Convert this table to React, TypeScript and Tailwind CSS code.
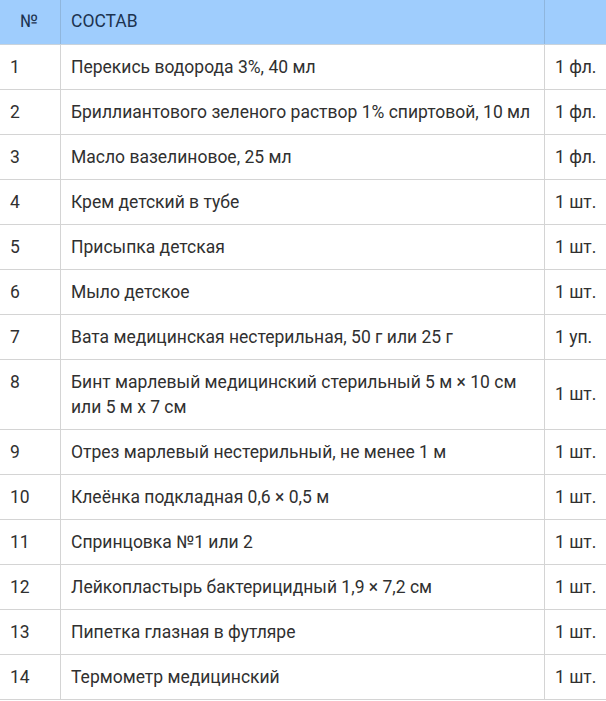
import React from "react";

const rows: [string, string, string][] = [
  ["1", "Перекись водорода 3%, 40 мл", "1 фл."],
  ["2", "Бриллиантового зеленого раствор 1% спиртовой, 10 мл", "1 фл."],
  ["3", "Масло вазелиновое, 25 мл", "1 фл."],
  ["4", "Крем детский в тубе", "1 шт."],
  ["5", "Присыпка детская", "1 шт."],
  ["6", "Мыло детское", "1 шт."],
  ["7", "Вата медицинская нестерильная, 50 г или 25 г", "1 уп."],
  ["8", "Бинт марлевый медицинский стерильный 5 м × 10 см или 5 м х 7 см", "1 шт."],
  ["9", "Отрез марлевый нестерильный, не менее 1 м", "1 шт."],
  ["10", "Клеёнка подкладная 0,6 × 0,5 м", "1 шт."],
  ["11", "Спринцовка №1 или 2", "1 шт."],
  ["12", "Лейкопластырь бактерицидный 1,9 × 7,2 см", "1 шт."],
  ["13", "Пипетка глазная в футляре", "1 шт."],
  ["14", "Термометр медицинский", "1 шт."],
];

export default function App() {
  return (
    <div
      className="w-[606px] h-[701px] bg-white overflow-hidden text-[17.5px] leading-[25px] text-[#303030]"
      style={{ fontFamily: "Roboto, 'Noto Sans', sans-serif" }}
    >
      <div className="grid grid-cols-[60px_484px_62px] bg-[#9fcdfd] text-[#1c3350] h-[45px] border-b border-[#c9d3dc]">
        <div className="pl-[20px] pt-[9px]">№</div>
        <div className="border-l border-[#8fb6dd] pl-[10px] pt-[9px]">СОСТАВ</div>
        <div className="border-l border-[#8fb6dd]"></div>
      </div>
      {rows.map(([n, t, q]) => (
        <div key={n} className="grid grid-cols-[60px_484px_62px] border-b border-[#d4d4d4]">
          <div className="pl-[10px] pt-[10px] pb-[9px]">{n}</div>
          <div className="border-l border-[#d4d4d4] pl-[10px] pr-[8px] pt-[10px] pb-[9px]">{t}</div>
          <div className="border-l border-[#d4d4d4] pl-[10px] flex items-center whitespace-nowrap">{q}</div>
        </div>
      ))}
    </div>
  );
}
